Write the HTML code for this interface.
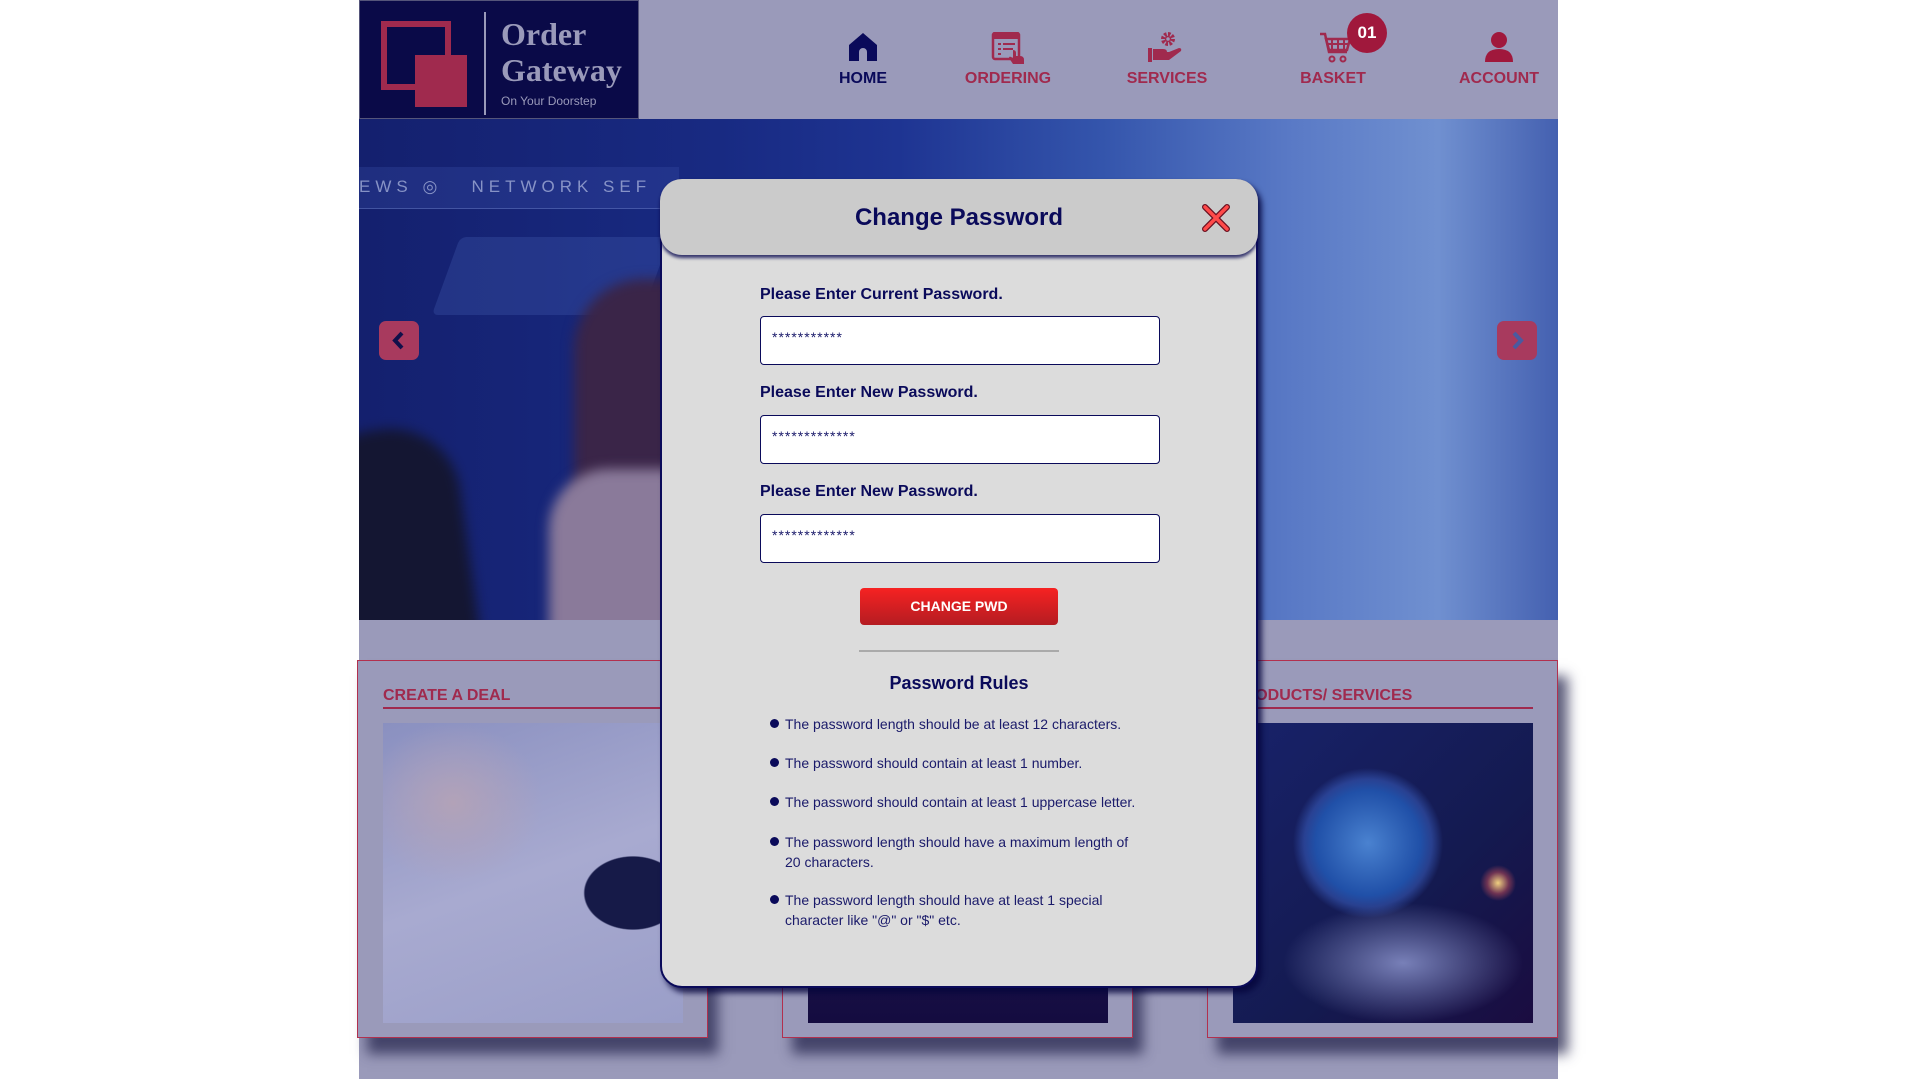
<!DOCTYPE html>
<html><head><meta charset="utf-8">
<style>
*{margin:0;padding:0;box-sizing:border-box}
html,body{width:1920px;height:1079px;overflow:hidden;background:#fff;font-family:"Liberation Sans",sans-serif}
.page{position:absolute;left:359px;top:0;width:1199px;height:1079px;background:#9a9aba}
.logo{position:absolute;left:359px;top:0;width:280px;height:119px;background:#0a0a48;border:1px solid #55557a}
.nav{position:absolute;top:0;height:119px;text-align:center;font-weight:bold;font-size:16px;color:#a02a4e}
.nav .lbl{position:absolute;top:70px;left:0;width:100%;white-space:nowrap}
.nav svg{position:absolute;left:50%;transform:translateX(-50%)}
.hero{position:absolute;left:359px;top:119px;width:1199px;height:501px;overflow:hidden;
background:
radial-gradient(ellipse 260px 200px at 1390px 360px,rgba(200,212,245,.6),rgba(190,205,240,0)),
radial-gradient(ellipse 200px 150px at 1450px 150px,rgba(180,198,240,.55),rgba(0,0,0,0)),
linear-gradient(90deg,#14206e 0%,#182a82 30%,#1e3492 45%,#3455ac 62%,#5a7ac6 78%,#7090d0 90%,#4460b0 100%);
background-position:-359px 0,-359px 0,0 0;background-repeat:no-repeat}
.arrow{position:absolute;top:321px;width:40px;height:39px;background:#a83a5e;border-radius:7px}
.card{position:absolute;top:660px;width:351px;height:378px;border:1px solid #b2304e;background:#9a9aba;box-shadow:10px 16px 12px rgba(40,40,80,.75)}
.card .t{position:absolute;left:25px;top:26px;font-weight:bold;font-size:16px;color:#a02a4e;white-space:nowrap}
.card .u{position:absolute;left:25px;top:46px;width:300px;height:2px;background:#a02a4e}
.card .im{position:absolute;left:25px;top:62px;width:300px;height:300px}
.modal{position:absolute;left:660px;top:179px;width:598px;height:809px;background:#dcdcdc;border:2px solid #0a0a5a;border-radius:22px;box-shadow:4px 5px 6px rgba(5,5,60,.8)}
.mh{position:absolute;left:-2px;top:-2px;width:598px;height:76px;background:#cbcbcb;border-radius:22px;box-shadow:0 3px 3px rgba(10,10,80,.8)}
.mh .tt{position:absolute;left:0;width:100%;top:25px;text-align:center;font-size:24px;font-weight:bold;color:#0a0a5a}
.lab{position:absolute;left:98px;font-size:16px;font-weight:bold;color:#0a0a5a}
.inp{position:absolute;left:98px;width:400px;height:49px;background:#fff;border:1px solid #0a0a5a;border-radius:4px;font-size:14px;color:#1a1a6a;padding:12px 0 0 11px;letter-spacing:1px}
.btn{position:absolute;left:198px;top:407px;width:198px;height:37px;border-radius:4px;background:linear-gradient(#f62222,#b41c22);color:#fff;font-weight:bold;font-size:14px;text-align:center;line-height:37px}
.hr{position:absolute;left:197px;top:469px;width:200px;height:2px;background:#aaa}
.pr{position:absolute;left:0;width:100%;top:492px;text-align:center;font-size:18px;font-weight:bold;color:#0a0a5a}
.rule{position:absolute;left:123px;font-size:14px;line-height:20px;color:#1a1a6a;width:355px}
.rule:before{content:"";position:absolute;left:-15px;top:5px;width:9px;height:9px;border-radius:50%;background:#0a0a5a}
.bl{filter:blur(6px)}
</style></head><body>
<div class="page"></div>
<div class="logo">
<svg width="280" height="119" style="position:absolute;left:0;top:0">
<rect x="24" y="23" width="64" height="63" fill="none" stroke="#a02a4e" stroke-width="6"/>
<rect x="55" y="54" width="52" height="52" fill="#a02a4e"/>
<rect x="124" y="11" width="2" height="103" fill="#9a9aba"/>
<text x="141" y="44" font-family="Liberation Serif" font-weight="bold" font-size="32" fill="#9a9aba">Order</text>
<text x="141" y="80" font-family="Liberation Serif" font-weight="bold" font-size="32" fill="#9a9aba">Gateway</text>
<text x="141" y="104" font-family="Liberation Sans" font-size="12" fill="#9a9aba">On Your Doorstep</text>
</svg></div>

<div class="nav" style="left:823px;width:80px;color:#0a0a5a">
<svg width="32" height="32" style="top:31px" viewBox="0 0 32 32"><path d="M16 2 L30 14 V30 H20 V21 a4 4 0 0 0 -8 0 V30 H2 V14 Z" fill="#0a0a5a"/></svg>
<div class="lbl">HOME</div></div>
<div class="nav" style="left:958px;width:100px">
<svg width="34" height="32" style="top:32px" viewBox="0 0 34 32"><rect x="2" y="1" width="26" height="26" rx="2" fill="none" stroke="#a02a4e" stroke-width="2.5"/><rect x="2" y="1" width="26" height="6" fill="#a02a4e"/><rect x="7" y="11" width="3" height="2" fill="#a02a4e"/><rect x="12" y="11" width="12" height="2" fill="#a02a4e"/><rect x="7" y="16" width="3" height="2" fill="#a02a4e"/><rect x="12" y="16" width="10" height="2" fill="#a02a4e"/><rect x="7" y="21" width="3" height="2" fill="#a02a4e"/><path d="M22 18 q3 0 3 3 v3 h4 q4 0 4 4 v4 h-11 l-4 -6 q0-2 2-1 l2 1 z" fill="#a02a4e"/></svg>
<div class="lbl">ORDERING</div></div>
<div class="nav" style="left:1112px;width:110px">
<svg width="40" height="32" style="top:31px" viewBox="0 0 40 32"><circle cx="21" cy="8" r="5" fill="none" stroke="#a02a4e" stroke-width="4" stroke-dasharray="2.5 1.4"/><circle cx="21" cy="8" r="2.5" fill="none" stroke="#a02a4e" stroke-width="1.5"/><rect x="1" y="17" width="4" height="14" fill="#a02a4e"/><path d="M6 18 h10 q4 0 4 3 h-6 h8 l10 -4 q3 0 2 3 l-12 9 h-16 z" fill="#a02a4e"/></svg>
<div class="lbl">SERVICES</div></div>
<div class="nav" style="left:1293px;width:80px">
<svg width="34" height="32" style="top:32px;left:26px;transform:none" viewBox="0 0 34 32"><path d="M1 2 h5 l4 18 h18" fill="none" stroke="#a02a4e" stroke-width="2.5"/><path d="M7 7 h24 l-3 11 h-18 z" fill="none" stroke="#a02a4e" stroke-width="2.5"/><path d="M13 8 v9 M19 8 v9 M25 8 v9 M8 12 h22" stroke="#a02a4e" stroke-width="2"/><circle cx="13" cy="27" r="2.5" fill="none" stroke="#a02a4e" stroke-width="2"/><circle cx="24" cy="27" r="2.5" fill="none" stroke="#a02a4e" stroke-width="2"/></svg>
<div class="lbl">BASKET</div></div>
<div style="position:absolute;left:1347px;top:13px;width:40px;height:40px;border-radius:50%;background:#a0183c;color:#fff;font-weight:bold;font-size:17px;text-align:center;line-height:40px">01</div>
<div class="nav" style="left:1449px;width:100px">
<svg width="32" height="32" style="top:31px" viewBox="0 0 32 32"><circle cx="16" cy="9" r="8" fill="#a0183c"/><path d="M2 31 q0 -13 14 -13 q14 0 14 13 z" fill="#a0183c"/></svg>
<div class="lbl">ACCOUNT</div></div>

<div class="hero">
<div style="position:absolute;left:0;top:48px;width:320px;height:42px;background:rgba(60,80,170,.3);border-bottom:1px solid rgba(120,140,210,.4)"></div>
<div style="position:absolute;left:0;top:58px;width:320px;height:30px;color:rgba(170,180,220,.75);font-size:17px;letter-spacing:5px;white-space:nowrap">EWS ◎ &nbsp; NETWORK SEF</div>
<div style="position:absolute;left:87px;top:118px;width:210px;height:78px;background:rgba(70,95,180,.3);transform:skewX(-20deg);border-radius:6px"></div>
<div class="bl" style="position:absolute;left:-40px;top:310px;width:150px;height:260px;background:#141632;border-radius:70px 70px 0 0;transform:rotate(-8deg)"></div>
<div class="bl" style="position:absolute;left:215px;top:160px;width:110px;height:300px;background:#3a2548;border-radius:70px 0 0 0"></div>
<div class="bl" style="position:absolute;left:190px;top:350px;width:140px;height:180px;background:#8a7a9a;border-radius:60px 0 0 0"></div>
</div>
<div class="arrow" style="left:379px"><svg width="40" height="39" viewBox="0 0 40 39"><path d="M23 12 l-7 7.5 l7 7.5" fill="none" stroke="#10104a" stroke-width="4"/></svg></div>
<div class="arrow" style="left:1497px"><svg width="40" height="39" viewBox="0 0 40 39"><path d="M17 12 l7 7.5 l-7 7.5" fill="none" stroke="#4a5aa0" stroke-width="4"/></svg></div>

<div class="card" style="left:357px"><div class="t">CREATE A DEAL</div><div class="u"></div>
<div class="im" style="background:radial-gradient(ellipse 80px 60px at 250px 170px,#161a48 0,#161a48 60%,rgba(0,0,0,0) 62%),radial-gradient(ellipse 90px 80px at 70px 80px,#b2a2b8,rgba(0,0,0,0)),linear-gradient(160deg,#8a90c0,#a8aad0 50%,#9a9ec8)"></div></div>
<div class="card" style="left:782px"><div class="t">ORDER</div><div class="u"></div>
<div class="im" style="background:linear-gradient(#2a2060,#140c40)"></div></div>
<div class="card" style="left:1207px"><div class="t">PRODUCTS/ SERVICES</div><div class="u"></div>
<div class="im" style="background:radial-gradient(circle 18px at 265px 160px,#f0d080,rgba(200,80,90,.5) 60%,rgba(0,0,0,0)),radial-gradient(circle 75px at 135px 120px,#4a82d0,#2050a8 70%,rgba(60,100,200,.5) 85%,rgba(0,0,0,0)),radial-gradient(ellipse 120px 60px at 170px 240px,#7880b8,rgba(0,0,0,0)),linear-gradient(135deg,#18226a,#141a50 60%,#1a0c40)"></div></div>

<div class="modal">
<div class="mh"><div class="tt">Change Password</div>
<svg width="30" height="30" viewBox="0 0 30 30" style="position:absolute;left:541px;top:24px"><path d="M4 4 L26 26 M26 4 L4 26" stroke="#6a1020" stroke-width="6" stroke-linecap="round"/><path d="M4 4 L26 26 M26 4 L4 26" stroke="#ff4a4a" stroke-width="3.5" stroke-linecap="round"/></svg></div>
<div class="lab" style="top:105px">Please Enter Current Password.</div>
<div class="inp" style="top:135px">***********</div>
<div class="lab" style="top:203px">Please Enter New Password.</div>
<div class="inp" style="top:234px">*************</div>
<div class="lab" style="top:302px">Please Enter New Password.</div>
<div class="inp" style="top:333px">*************</div>
<div class="btn">CHANGE PWD</div>
<div class="hr"></div>
<div class="pr">Password Rules</div>
<div class="rule" style="top:533px">The password length should be at least 12 characters.</div>
<div class="rule" style="top:572px">The password should contain at least 1 number.</div>
<div class="rule" style="top:611px">The password should contain at least 1 uppercase letter.</div>
<div class="rule" style="top:651px">The password length should have a maximum length of 20 characters.</div>
<div class="rule" style="top:709px">The password length should have at least 1 special character like "@" or "$" etc.</div>
</div>
</body></html>
